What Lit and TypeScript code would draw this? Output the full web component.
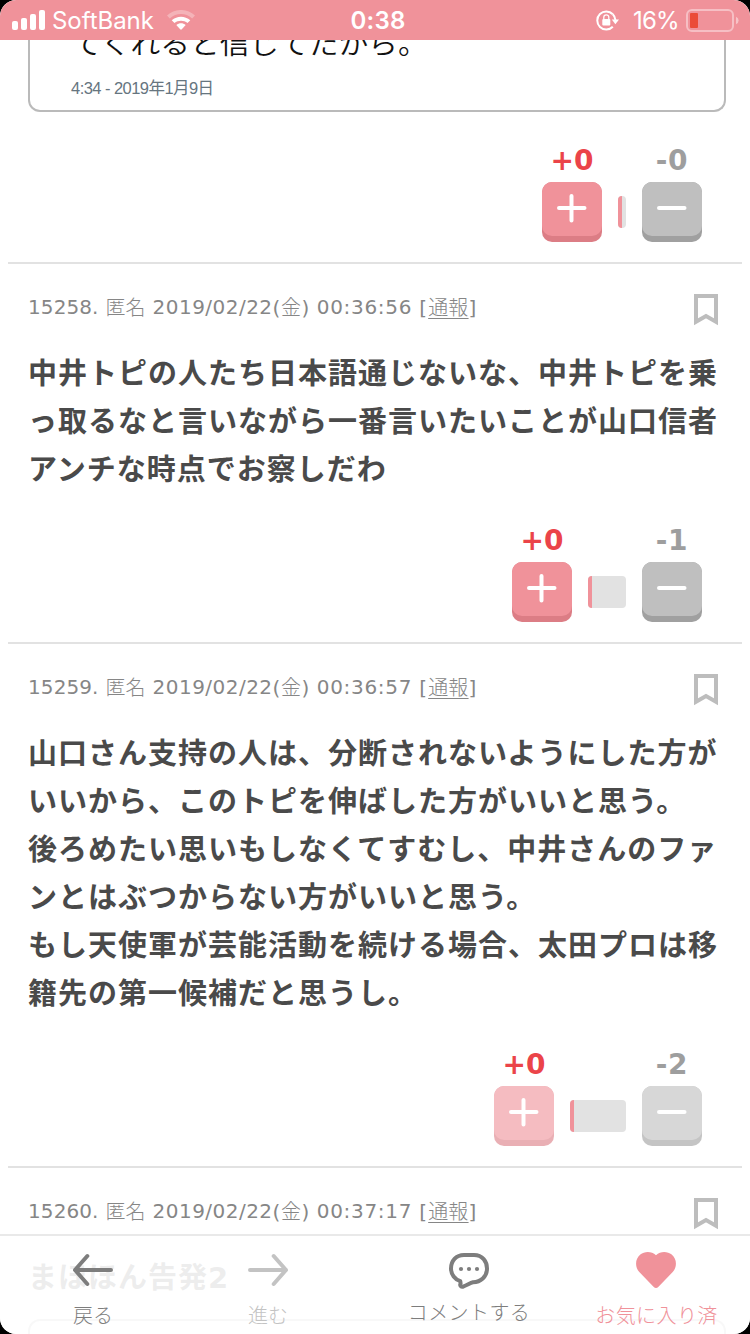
import { LitElement, html, css, svg } from 'lit';
import { customElement, property } from 'lit/decorators.js';

interface Comment {
  no: string;
  date: string;
  time: string;
  lines: string[];
  minus: number;
  meter: number;
  faded?: boolean;
}

const comments: Comment[] = [
  {
    no: '15258.',
    date: '2019/02/22',
    time: '00:36:56',
    lines: [
      '中井トピの人たち日本語通じないな、中井トピを乗',
      'っ取るなと言いながら一番言いたいことが山口信者',
      'アンチな時点でお察しだわ',
    ],
    minus: 1,
    meter: 38,
  },
  {
    no: '15259.',
    date: '2019/02/22',
    time: '00:36:57',
    lines: [
      '山口さん支持の人は、分断されないようにした方が',
      'いいから、このトピを伸ばした方がいいと思う。',
      '後ろめたい思いもしなくてすむし、中井さんのファ',
      'ンとはぶつからない方がいいと思う。',
      'もし天使軍が芸能活動を続ける場合、太田プロは移',
      '籍先の第一候補だと思うし。',
    ],
    minus: 2,
    meter: 56,
    faded: true,
  },
];

@customElement('status-bar')
export class StatusBar extends LitElement {
  static styles = css`
    :host {
      display: grid;
      grid-template-columns: 1fr auto 1fr;
      align-items: center;
      height: 40px;
      box-sizing: border-box;
      padding: 0 11px 0 12px;
      background: #f0929a;
      color: #fff;
      font: 400 24px/38px Inter, 'Liberation Sans', sans-serif;
      border-radius: 16px 16px 0 0;
    }
    .side { display: flex; align-items: center; }
    .right { justify-content: flex-end; }
    .side span, .time { padding-top: 2px; }
    .carrier { margin: 0 13px 0 7px; letter-spacing: -0.05px; }
    .time { font-weight: 600; letter-spacing: 0.2px; padding-left: 5px; }
    .pct { margin: 0 7px 0 14px; letter-spacing: -0.7px; }
    svg { display: block; }
  `;
  render() {
    return html`
      <div class="side">
        <svg width="33" height="20" viewBox="0 0 33 20" fill="#fff">
          <rect x="0" y="11" width="6" height="9" rx="2" />
          <rect x="9" y="8" width="6" height="12" rx="2" />
          <rect x="18" y="4" width="6" height="16" rx="2" />
          <rect x="27" y="0" width="6" height="20" rx="2" />
        </svg>
        <span class="carrier">SoftBank</span>
        <svg width="28" height="20" viewBox="0 0 28 20" fill="#fff">
          <path opacity=".3" d="M0 5.6C8-1.9 20-1.9 28 5.6L25.2 8.5C18.8 2.6 9.2 2.6 2.8 8.5Z" />
          <path d="M4.7 10.3C10.2 5.5 17.8 5.5 23.3 10.3L20.5 13.1C16.9 10 11.1 10 7.5 13.1Z" />
          <path d="M9.3 15C12.1 12.7 15.9 12.7 18.7 15L14.8 19.3Q14 20 13.2 19.3Z" />
        </svg>
      </div>
      <span class="time">0:38</span>
      <div class="side right">
        <svg width="23" height="21" viewBox="0 0 23 21">
          <path d="M16.8 4.3A9 9 0 1 0 16.8 16.7" fill="none" stroke="#fff" stroke-width="2" />
          <path d="M15.8 9.6H23L19.4 14.2Z" fill="#fff" />
          <path d="M16.8 4.3A9 9 0 0 1 19.4 10" fill="none" stroke="#fff" stroke-width="2" />
          <rect x="6.3" y="9" width="8" height="6.6" rx="1" fill="#fff" />
          <path d="M7.8 9.4V7.3a2.5 2.5 0 0 1 5 0v2.1" fill="none" stroke="#fff" stroke-width="1.3" />
        </svg>
        <span class="pct">16%</span>
        <svg width="53" height="24" viewBox="0 0 53 24">
          <rect x="1" y="2" width="46" height="21" rx="5" fill="none" stroke="#fff" stroke-opacity=".42" stroke-width="2" />
          <rect x="4" y="5" width="8" height="15" rx="1" fill="#eb4b38" />
          <path d="M50 8.8Q52.6 9.8 52.6 12.5T50 16.2Z" fill="#fff" opacity=".45" />
        </svg>
      </div>
    `;
  }
}

@customElement('vote-row')
export class VoteRow extends LitElement {
  @property({ type: Number }) minus = 0;
  @property({ type: Number }) meter = 8;
  @property({ type: Boolean }) faded = false;

  static styles = css`
    :host {
      display: flex;
      justify-content: flex-end;
      gap: 16px;
      padding-right: 20px;
      font: 700 28px/36px 'DejaVu Sans', Verdana, sans-serif;
    }
    .col { display: flex; flex-direction: column; align-items: center; width: 60px; }
    .plus { color: #eb4449; }
    .minus { color: #9e9e9e; }
    .minus span { letter-spacing: 0.8px; }
    .col span { padding-top: 1px; }
    .btn {
      box-sizing: border-box;
      width: 60px;
      height: 60px;
      margin-top: 3px;
      border-radius: 10px;
      background: #dc7d85;
    }
    .face { display: block; width: 60px; height: 54px; border-radius: 10px; background: #f0929a; }
    .minus .btn { background: #a0a0a0; }
    .minus .face { background: #bfbfbf; }
    .faded { opacity: 0.61; }
    .meter {
      height: 32px;
      margin-top: 54px;
      border-radius: 4px;
      overflow: hidden;
      background: #e2e2e2;
    }
    .fill { width: 4px; height: 32px; background: #f0929a; }
    svg { display: block; }
  `;
  render() {
    const fade = this.faded ? 'faded' : '';
    return html`
      <div class="col plus">
        <span>+0</span>
        <div class="btn ${fade}">
          <div class="face">
            <svg width="60" height="54" viewBox="0 0 60 54" stroke="#fff" stroke-width="4" stroke-linecap="round">
              <path d="M17 26H42.5M29.5 14V38.5" />
            </svg>
          </div>
        </div>
      </div>
      <div class="meter" style="width:${this.meter}px"><div class="fill"></div></div>
      <div class="col minus">
        <span>-${this.minus}</span>
        <div class="btn ${fade}">
          <div class="face">
            <svg width="60" height="54" viewBox="0 0 60 54" stroke="#fff" stroke-width="4" stroke-linecap="round">
              <path d="M17 26H42.5" />
            </svg>
          </div>
        </div>
      </div>
    `;
  }
}

@customElement('comment-head')
export class CommentHead extends LitElement {
  @property() no = '';
  @property() date = '';
  @property() time = '';

  static styles = css`
    :host {
      display: flex;
      justify-content: space-between;
      align-items: flex-start;
      height: 50px;
      font: 400 20px/26px 'DejaVu Sans', 'Noto Sans CJK JP', sans-serif;
      color: #868686;
    }
    .meta { display: flex; gap: 7px; white-space: nowrap; }
    .no { letter-spacing: 0.1px; }
    .date { letter-spacing: 0.47px; }
    .time { letter-spacing: 0.7px; }
    .paren { letter-spacing: 0.5px; }
    .stamp { display: flex; }
    .kanji { font-family: 'Noto Sans CJK JP', sans-serif; font-weight: 300; }
    .bracket { letter-spacing: 1.2px; }
    .report { letter-spacing: 0.2px; text-decoration: underline; text-decoration-thickness: 1px; text-underline-offset: 3px; }
    .mark { display: block; margin-right: 4px; }
  `;
  render() {
    return html`
      <div class="meta">
        <span class="no">${this.no}</span>
        <span class="kanji">匿名</span>
        <span class="stamp"><span class="date">${this.date}</span><span class="paren">(<span class="kanji">金</span>)</span></span>
        <span class="time">${this.time}</span>
        <span class="bracket">[<span class="report kanji">通報</span>]</span>
      </div>
      <svg class="mark" width="24" height="32" viewBox="0 0 24 32">
        <path d="M2 2H22V27.8L12 22L2 27.8Z" fill="none" stroke="#bdbdbd" stroke-width="4" />
      </svg>
    `;
  }
}

const navIcons = {
  back: svg`<path d="M4 20H40M16.3 6L4 20L16.3 34" fill="none" stroke="currentColor" stroke-width="4" stroke-linecap="round" stroke-linejoin="round"/>`,
  forward: svg`<path d="M4 20H40M27.7 6L40 20L27.7 34" fill="none" stroke="currentColor" stroke-width="4" stroke-linecap="round" stroke-linejoin="round"/>`,
  comment: svg`<path d="M17 5H27C35.5 5 40 11.5 40 18.5C40 27 33.5 32 26 32.3C23 33 19.5 35.7 15.8 36.7C13.5 37.2 12.7 35 13.6 33.5L13.3 31.2C8 29.5 4 24.5 4 18.5C4 11 9 5 17 5Z" fill="none" stroke="currentColor" stroke-width="4" stroke-linejoin="round"/>
    <circle cx="14" cy="19" r="2.1" fill="currentColor"/><circle cx="22" cy="19" r="2.1" fill="currentColor"/><circle cx="30" cy="19" r="2.1" fill="currentColor"/>`,
  heart: svg`<path d="M22 5.2C17.5 .9 10.5 1.1 6.3 4.6C.9 9.2 .8 17 5.3 22L19.5 36.7Q22 39.2 24.5 36.7L38.7 22C43.2 17 43.1 9.2 37.7 4.6C33.5 1.1 26.5 .9 22 5.2Z" fill="currentColor"/>`,
};

@customElement('bottom-nav')
export class BottomNav extends LitElement {
  static styles = css`
    :host {
      display: grid;
      grid-template-columns: 186px 164px 237px 1fr;
      box-sizing: border-box;
      height: 100px;
      padding-right: 25px;
      border-top: 2px solid #e9e9e9;
      background: rgba(255, 255, 255, 0.9);
      font: 300 20px/30px 'Noto Sans CJK JP', sans-serif;
      color: #7d7d7d;
    }
    .item { display: flex; flex-direction: column; align-items: center; padding-top: 14px; gap: 10px; }
    .raised { gap: 7px; }
    .off { color: #c3c3c3; }
    .on { color: #f0929a; }
    .wide { letter-spacing: 0.4px; padding-left: 1px; }
    svg { display: block; flex: none; }
  `;
  render() {
    const icon = (g: unknown) => html`<svg width="44" height="40" viewBox="0 0 44 40">${g}</svg>`;
    return html`
      <div class="item">${icon(navIcons.back)}<span>戻る</span></div>
      <div class="item off">${icon(navIcons.forward)}<span>進む</span></div>
      <div class="item raised">${icon(navIcons.comment)}<span class="wide">コメントする</span></div>
      <div class="item on">${icon(navIcons.heart)}<span class="wide">お気に入り済</span></div>
    `;
  }
}

@customElement('app-root')
export class AppRoot extends LitElement {
  static styles = css`
    :host {
      display: block;
      position: relative;
      width: 750px;
      height: 1334px;
      overflow: hidden;
      background: #000;
      font-family: 'DejaVu Sans', 'Noto Sans CJK JP', sans-serif;
    }
    .screen {
      display: flex;
      flex-direction: column;
      height: 1334px;
      overflow: hidden;
      border-radius: 16px;
      background: #fff;
    }
    status-bar { flex: none; }
    .feed { flex: 1; min-height: 0; overflow: hidden; padding: 0 8px; }
    .post { box-sizing: border-box; padding: 0 20px; border-bottom: 2px solid #e2e2e2; }
    .first { height: 224px; }
    .tweet {
      box-sizing: border-box;
      height: 72px;
      width: 698px;
      padding-left: 41px;
      overflow: hidden;
      border: 2px solid #bababa;
      border-top: 0;
      border-radius: 0 0 12px 12px;
    }
    .quote {
      margin-top: -21px;
      height: 56px;
      padding-left: 1px;
      font: 350 27px/48px 'Noto Sans CJK JP', sans-serif;
      color: #111;
      white-space: nowrap;
      transform: scaleX(1.1);
      transform-origin: 0 0;
    }
    .posted {
      font: 16.5px/26px 'Liberation Sans', 'Noto Sans CJK JP', sans-serif;
      letter-spacing: -0.55px;
      color: #66757f;
    }
    .first vote-row { padding-top: 30px; }
    .post vote-row { padding-bottom: 20px; }
    comment-head { padding-top: 30px; }
    .body {
      margin: 0 -8px 31px 0;
      padding-top: 3px;
      font: 700 29px/48px 'Noto Sans CJK JP', sans-serif;
      letter-spacing: 1px;
      color: #4a4a4a;
      white-space: nowrap;
    }
    .two { font-family: 'DejaVu Sans', sans-serif; }
    .next { border-bottom: 0; }
    .card { width: 694px; height: 60px; border: 2px solid #bababa; border-radius: 12px; margin-top: -14px; }
    bottom-nav { position: absolute; left: 0; right: 0; bottom: 0; border-radius: 0 0 16px 16px; }
  `;
  render() {
    return html`
      <div class="screen">
        <status-bar></status-bar>
        <div class="feed">
          <div class="post first">
            <div class="tweet">
              <div class="quote">てくれると信じてたから。</div>
              <div class="posted">4:34 - 2019年1月9日</div>
            </div>
            <vote-row .minus=${0} .meter=${8}></vote-row>
          </div>
          ${comments.map(
            (c) => html`<div class="post">
              <comment-head .no=${c.no} .date=${c.date} .time=${c.time}></comment-head>
              <div class="body">${c.lines.map((l) => html`<div>${l}</div>`)}</div>
              <vote-row .minus=${c.minus} .meter=${c.meter} .faded=${!!c.faded}></vote-row>
            </div>`
          )}
          <div class="post next">
            <comment-head .no=${'15260.'} .date=${'2019/02/22'} .time=${'00:37:17'}></comment-head>
            <div class="body">まほほん告発<span class="two">2</span></div>
            <div class="card"></div>
          </div>
        </div>
      </div>
      <bottom-nav></bottom-nav>
    `;
  }
}
